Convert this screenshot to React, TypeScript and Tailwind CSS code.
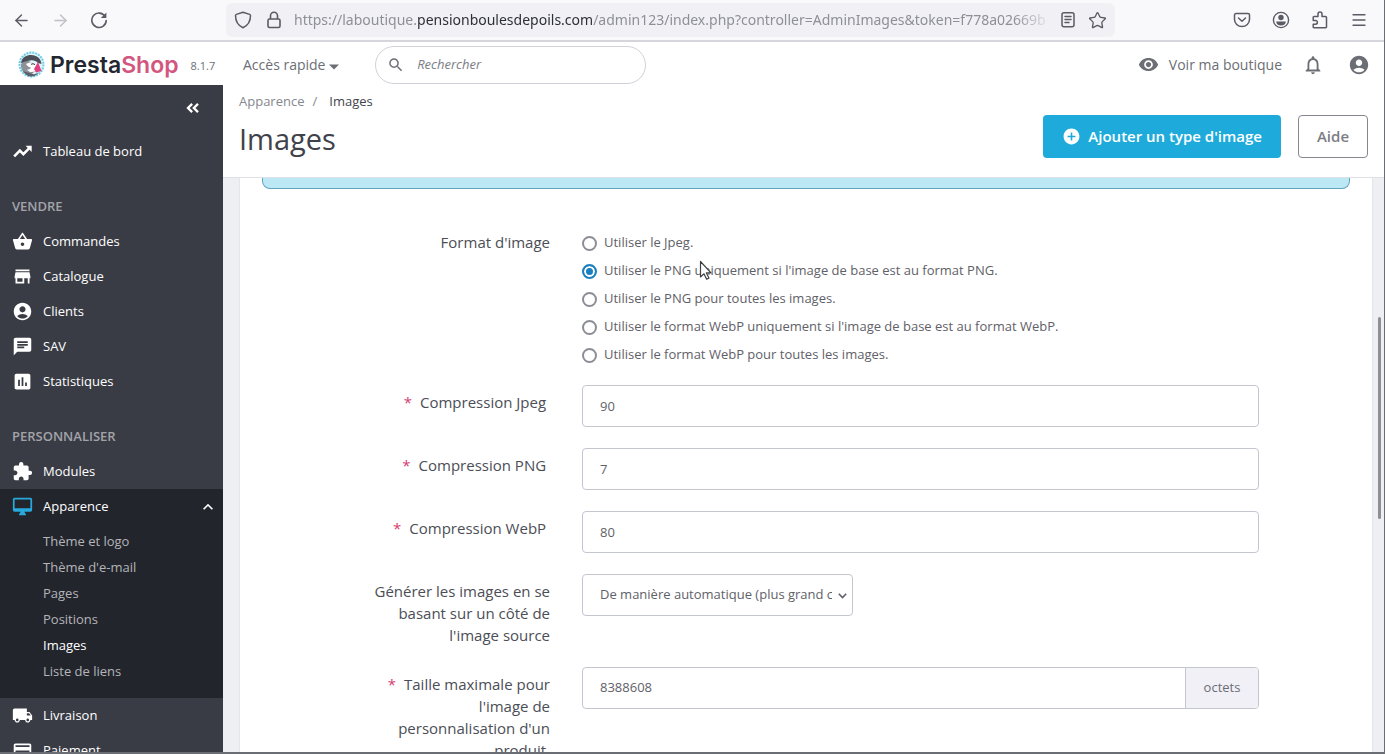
import { useState } from "react";
import type { ComponentType, ReactNode } from "react";
import { ArrowLeft, ArrowRight, ChevronsLeft, Menu, Star } from "lucide-react";
import {
  MdAccountCircle,
  MdAddCircle,
  MdAssessment,
  MdChat,
  MdExtension,
  MdKeyboardArrowUp,
  MdNotificationsNone,
  MdPayment,
  MdSearch,
} from "react-icons/md";

interface IconProps {
  size?: number;
  className?: string;
}

interface NavItem {
  label: string;
  icon: ComponentType<IconProps>;
}

// filled variants of the material icons
function solidIcon(d: string) {
  return function SolidIcon({ size = 24, className }: IconProps) {
    return (
      <svg width={size} height={size} viewBox="0 0 24 24" fill="currentColor" className={className}>
        <path d={d} />
      </svg>
    );
  };
}

const BasketIcon = solidIcon(
  "M17.21 9l-4.38-6.56c-.19-.28-.51-.42-.83-.42-.32 0-.64.14-.83.43L6.79 9H2c-.55 0-1 .45-1 1 0 .09.01.18.04.27l2.54 9.27c.23.84 1 1.46 1.92 1.46h13c.92 0 1.69-.62 1.93-1.46l2.54-9.27L23 10c0-.55-.45-1-1-1h-4.79zM9 9l3-4.4L15 9H9zm3 8c-1.1 0-2-.9-2-2s.9-2 2-2 2 .9 2 2-.9 2-2 2z"
);
const StoreIcon = solidIcon(
  "M20 4H4v2h16V4zm1 10v-2l-1-5H4l-1 5v2h1v6h10v-6h4v6h2v-6h1zm-9 4H6v-4h6v4z"
);
const TruckIcon = solidIcon(
  "M20 8h-3V4H3c-1.1 0-2 .9-2 2v11h2c0 1.66 1.34 3 3 3s3-1.34 3-3h6c0 1.66 1.34 3 3 3s3-1.34 3-3h2v-5l-3-4zM6 18.5c-.83 0-1.5-.67-1.5-1.5s.67-1.5 1.5-1.5 1.5.67 1.5 1.5-.67 1.5-1.5 1.5zm13.5-9l1.96 2.5H17V9.5h2.5zm-1.5 9c-.83 0-1.5-.67-1.5-1.5s.67-1.5 1.5-1.5 1.5.67 1.5 1.5-.67 1.5-1.5 1.5z"
);
const DesktopIcon = solidIcon(
  "M21 2H3c-1.1 0-2 .9-2 2v12c0 1.1.9 2 2 2h7l-2 3v1h8v-1l-2-3h7c1.1 0 2-.9 2-2V4c0-1.1-.9-2-2-2zm0 12H3V4h18v10z"
);
const EyeIcon = solidIcon(
  "M12 4.5C7 4.5 2.73 7.61 1 12c1.73 4.39 6 7.5 11 7.5s9.27-3.11 11-7.5c-1.73-4.39-6-7.5-11-7.5zM12 17c-2.76 0-5-2.24-5-5s2.24-5 5-5 5 2.24 5 5-2.24 5-5 5zm0-8c-1.66 0-3 1.34-3 3s1.34 3 3 3 3-1.34 3-3-1.34-3-3-3z"
);

function TrendIcon({ size = 24, className }: IconProps) {
  return (
    <svg width={size} height={size} viewBox="0 0 24 24" fill="none" stroke="currentColor" className={className}>
      <path d="m2.5 17.5 6.5-6.5 4 4 6.5-6.5" strokeWidth="3" />
      <path d="M15.5 5.5H22.5V12.5z" fill="currentColor" strokeWidth="0" />
    </svg>
  );
}

const sellItems: NavItem[] = [
  { label: "Commandes", icon: BasketIcon },
  { label: "Catalogue", icon: StoreIcon },
  { label: "Clients", icon: MdAccountCircle },
  { label: "SAV", icon: MdChat },
  { label: "Statistiques", icon: MdAssessment },
];

const designLinks = [
  "Thème et logo",
  "Thème d'e-mail",
  "Pages",
  "Positions",
  "Images",
  "Liste de liens",
];

const formats = [
  { value: "jpg", label: "Utiliser le Jpeg." },
  { value: "png", label: "Utiliser le PNG uniquement si l'image de base est au format PNG." },
  { value: "png_all", label: "Utiliser le PNG pour toutes les images." },
  { value: "webp", label: "Utiliser le format WebP uniquement si l'image de base est au format WebP." },
  { value: "webp_all", label: "Utiliser le format WebP pour toutes les images." },
];

function ReloadIcon() {
  return (
    <svg width="18" height="18" viewBox="0 0 18 18" fill="none" stroke="currentColor" strokeWidth="1.6">
      <path d="M15.2 5.6A7.2 7.2 0 1 0 16.2 9.6" strokeLinecap="round" />
      <path d="M16.4 1.5v5.6h-5.6z" fill="currentColor" stroke="none" />
    </svg>
  );
}

function ShieldIcon() {
  return (
    <svg width="18" height="18" viewBox="0 0 18 18" fill="none" stroke="currentColor" strokeWidth="1.5" strokeLinejoin="round">
      <path d="M9 1.2 15.6 3.4c.6.2.9.6.9 1.2 0 5.6-2.3 9.9-7.5 12.2C3.8 14.5 1.5 10.2 1.5 4.6c0-.6.3-1 .9-1.2z" />
    </svg>
  );
}

function LockIcon() {
  return (
    <svg width="16" height="18" viewBox="0 0 16 18" fill="none" stroke="currentColor" strokeWidth="1.6">
      <rect x="2" y="8" width="12" height="8.5" rx="1.5" />
      <path d="M4.5 8V4.8a3.5 3.5 0 0 1 7 0V8" />
    </svg>
  );
}

function ReaderIcon() {
  return (
    <svg width="16" height="18" viewBox="0 0 16 18" fill="none" stroke="currentColor" strokeWidth="1.5">
      <rect x="2" y="1.8" width="12" height="14" rx="2" />
      <path d="M5 5.5h6M5 8.5h6M5 11.5h4" strokeLinecap="round" />
    </svg>
  );
}

function PocketIcon() {
  return (
    <svg width="18" height="18" viewBox="0 0 18 18" fill="none" stroke="currentColor" strokeWidth="1.5" strokeLinejoin="round">
      <path d="M3 2.5h12a1.5 1.5 0 0 1 1.5 1.5v4.5a7.5 7 0 0 1-15 0V4A1.5 1.5 0 0 1 3 2.5z" />
      <path d="m5.5 7 3.5 3.2L12.5 7" strokeLinecap="round" />
    </svg>
  );
}

function ProfileIcon() {
  return (
    <svg width="18" height="18" viewBox="0 0 18 18" fill="none">
      <circle cx="9" cy="9" r="7.6" stroke="currentColor" strokeWidth="1.4" />
      <circle cx="9" cy="6.5" r="2.7" fill="currentColor" />
      <path d="M4.2 10.5h9.6c0 2.4-2 4-4.8 4s-4.8-1.6-4.8-4z" fill="currentColor" />
    </svg>
  );
}

function PuzzleIcon() {
  return (
    <svg width="18" height="18" viewBox="0 0 18 18" fill="none" stroke="currentColor" strokeWidth="1.5" strokeLinejoin="round">
      <path d="M7 5.500V3a2 2 0 0 1 4 0v2.500h3.500a1 1 0 0 1 1 1V16a.8.8 0 0 1-.8.8H3a.8.8 0 0 1-.8-.8v-2.800h2.300a1.900 1.900 0 0 0 0-3.800H2.200V6.500a1 1 0 0 1 1-1z" />
    </svg>
  );
}

function PrestaLogo() {
  return (
    <svg width="27" height="27" viewBox="0 0 27 27">
      <circle cx="13.5" cy="13.5" r="12" fill="#dff4fb" stroke="#6ccbe6" strokeWidth="2" strokeDasharray="2 1" />
      <path d="M3 12C4 6 8.5 4 13 4c6 0 10 3.5 10.5 9l-3.5-1c-3-3.5-9-3.5-12-.5z" fill="#4a4f58" />
      <path d="M3 13c1.5-2 4.5-3 8-3l4 3 2 7-5 5C6.5 24 2.5 19 3 13z" fill="#8d9299" />
      <path d="M8 13c3-2.500 8-2 10 1l-1 6c-3 2-6.500 1-8-1.500 2 .3 3.500-.5 4-2-2-.2-4-1.500-5-3.500z" fill="#fff" />
      <path d="M13 13.500c1-1 3-1 4 .3" stroke="#2c2f36" strokeWidth="1" fill="none" />
      <path d="m20 11 3.500 9-5.500 1.500-2-3.500z" fill="#df3f7d" />
      <path d="M5 20c3 1.500 5 1 8 2.500s5 .5 8-1.500c-2 3-5 4.500-8 4.500S7 23.500 5 20z" fill="#5b6068" />
    </svg>
  );
}

function BrowserBar() {
  return (
    <div className="flex h-[42px] shrink-0 items-center border-b-2 border-[#d5d5db] bg-[#f9f9fb] pr-4 pl-3 text-[#5b5b66]">
      <div className="flex w-[214px] items-center gap-5">
        <button type="button" aria-label="Précédent">
          <ArrowLeft size={19} strokeWidth={1.8} />
        </button>
        <button type="button" aria-label="Suivant" className="text-[#c0c0c6]">
          <ArrowRight size={19} strokeWidth={1.8} />
        </button>
        <button type="button" aria-label="Actualiser">
          <ReloadIcon />
        </button>
      </div>
      <div className="flex h-[34px] min-w-0 flex-1 items-center rounded-md bg-[#f1f0f5] px-2">
        <ShieldIcon />
        <span className="ml-[14px] shrink-0">
          <LockIcon />
        </span>
        <div className="ml-3 min-w-0 flex-1 overflow-hidden mask-r-from-95% font-['Noto_Sans',sans-serif] text-sm whitespace-nowrap text-[#8f8f97]">
          https://laboutique.<span className="text-[#2f2f38]">pensionboulesdepoils.com</span>
          /admin123/index.php?controller=AdminImages&amp;token=f778a02669b
        </div>
        <button type="button" aria-label="Mode lecture" className="ml-2">
          <ReaderIcon />
        </button>
        <button type="button" aria-label="Marque-page" className="ml-3">
          <Star size={19} strokeWidth={1.7} />
        </button>
      </div>
      <div className="ml-[118px] flex shrink-0 items-center gap-[21px]">
        <button type="button" aria-label="Pocket">
          <PocketIcon />
        </button>
        <button type="button" aria-label="Compte">
          <ProfileIcon />
        </button>
        <button type="button" aria-label="Extensions">
          <PuzzleIcon />
        </button>
        <button type="button" aria-label="Menu">
          <Menu size={18} strokeWidth={1.7} />
        </button>
      </div>
    </div>
  );
}

function ShopHeader() {
  return (
    <header className="flex h-[43px] shrink-0 items-center bg-white pt-[2px] pr-[14px] pl-[18px] text-[#6c6e75]">
      <div className="flex w-[225px] items-center">
        <PrestaLogo />
        <span className="ml-[5px] font-[Inter,sans-serif] text-[23px] leading-8 font-semibold text-[#24272f]">
          Presta<span className="text-[#d3567f]">Shop</span>
        </span>
        <span className="mt-1 ml-3 text-[11px]">8.1.7</span>
      </div>
      <button type="button" className="flex items-center gap-1 text-sm">
        Accès rapide
        <svg width="10" height="6" viewBox="0 0 10 6" className="mt-1">
          <path d="M0 .5h10L5 5.5z" fill="currentColor" />
        </svg>
      </button>
      <label className="ml-9 flex h-[38px] w-[271px] items-center rounded-full border border-[#cfd2d9] pl-[11px]">
        <MdSearch size={20} />
        <input
          type="text"
          placeholder="Rechercher"
          aria-label="Rechercher"
          className="ml-3 w-full bg-transparent text-[13px] italic outline-none placeholder:text-[#7b7d84]"
        />
      </label>
      <a href="#boutique" className="ml-auto flex items-center gap-[10px] text-sm">
        <EyeIcon size={21} />
        Voir ma boutique
      </a>
      <button type="button" aria-label="Notifications" className="ml-5">
        <MdNotificationsNone size={22} />
      </button>
      <button type="button" aria-label="Mon compte" className="ml-6">
        <MdAccountCircle size={22} />
      </button>
    </header>
  );
}

function NavLink({ label, icon: Icon, active }: NavItem & { active?: boolean }) {
  return (
    <a href="#nav" className="flex h-[35px] items-center gap-[10px] pr-[5px] pl-3 text-[13px] text-white">
      <Icon size={21} className={active ? "text-[#27a9dc]" : "text-white"} />
      {label}
      {active && <MdKeyboardArrowUp size={20} className="ml-auto" />}
    </a>
  );
}

function NavTitle({ children }: { children: ReactNode }) {
  return <h2 className="mt-7 mb-[9px] pl-3 text-[13px] leading-[18px] font-semibold text-[#a2a4a9]">{children}</h2>;
}

function Sidebar() {
  return (
    <nav className="w-[223px] shrink-0 overflow-hidden bg-[#3a3c45]">
      <div className="flex h-[49px] justify-end pr-5">
        <button type="button" aria-label="Réduire le menu" className="h-[46px] text-white">
          <ChevronsLeft size={20} strokeWidth={2.8} strokeLinecap="butt" strokeLinejoin="miter" />
        </button>
      </div>
      <NavLink label="Tableau de bord" icon={TrendIcon} />
      <NavTitle>VENDRE</NavTitle>
      {sellItems.map((item) => (
        <NavLink key={item.label} {...item} />
      ))}
      <NavTitle>PERSONNALISER</NavTitle>
      <NavLink label="Modules" icon={MdExtension} />
      <div className="bg-[#23252d] pb-[14px]">
        <NavLink label="Apparence" icon={DesktopIcon} active />
        <ul className="pt-1 pl-[43px] text-[13px]">
          {designLinks.map((label) => (
            <li key={label} className="h-[26px] leading-[26px]">
              <a href="#apparence" className={label === "Images" ? "text-white" : "text-[#b3b5b9]"}>
                {label}
              </a>
            </li>
          ))}
        </ul>
      </div>
      <NavLink label="Livraison" icon={TruckIcon} />
      <NavLink label="Paiement" icon={MdPayment} />
    </nav>
  );
}

interface RowProps {
  label: string;
  id: string;
  required?: boolean;
  children: ReactNode;
}

function FormRow({ label, id, required, children }: RowProps) {
  return (
    <div className="flex">
      <label htmlFor={id} className="w-80 shrink-0 pt-[6px] pr-8 pl-[106px] text-right text-[15px] leading-[22px] text-[#4b4e56]">
        {required && <span className="mr-2 text-[#d3406f]">*</span>}
        {label}
        {required && "\u00a0"}
      </label>
      <div className="min-w-0 flex-1">{children}</div>
    </div>
  );
}

function TextInput({ id, value }: { id: string; value: string }) {
  return (
    <input
      id={id}
      type="text"
      defaultValue={value}
      className="h-[42px] w-full rounded border border-[#c3c6cf] bg-white px-[17px] text-[13px] text-[#5f6168]"
    />
  );
}

export default function App() {
  const [format, setFormat] = useState("png");

  return (
    <div className="relative flex h-screen flex-col overflow-hidden border-r border-b-2 border-[#6b6d75] bg-white font-['Open_Sans',sans-serif]">
      <BrowserBar />
      <ShopHeader />
      <div className="flex min-h-0 flex-1">
        <Sidebar />
        <div className="flex min-w-0 flex-1 flex-col">
          <div className="flex h-[93px] shrink-0 justify-between border-b border-[#dfe1e6] pr-4 pl-4">
            <div>
              <div className="flex gap-2 pt-1 text-[13px] leading-6 text-[#85878e]">
                <a href="#apparence">Apparence</a>
                <span>/</span>
                <span className="ml-1 text-[#42454d]">Images</span>
              </div>
              <h1 className="mt-1 text-[29px] leading-[44px] text-[#3f424a]">Images</h1>
            </div>
            <div className="flex gap-[17px] pt-[30px]">
              <button
                type="button"
                className="flex h-[43px] items-center gap-[7px] rounded bg-[#1eabdb] px-[19px] text-[15px] font-semibold text-white"
              >
                <MdAddCircle size={19} />
                Ajouter un type d'image
              </button>
              <button
                type="button"
                className="h-[43px] w-[70px] rounded border border-[#85878e] text-[15px] font-semibold text-[#7c7e85]"
              >
                Aide
              </button>
            </div>
          </div>

          <div className="relative min-h-0 flex-1 overflow-hidden bg-[#eeeff2] pr-[11px] pl-4">
            <main className="min-h-full border-x border-[#e0e6eb] bg-white px-[22px]">
              <div className="h-[11px] rounded-b-lg border border-t-0 border-[#5fa6bd] bg-[#bce7f5]" />

              <form className="pt-10 pr-[91px]">
                <div role="radiogroup" aria-labelledby="format-label" className="flex">
                  <div
                    id="format-label"
                    className="w-80 shrink-0 pt-[2px] pr-8 text-right text-[15px] leading-[22px] text-[#4b4e56]"
                  >
                    Format d'image
                  </div>
                  <div className="flex-1">
                    {formats.map((item) => (
                      <label key={item.value} className="flex h-7 items-center gap-[7px] text-[13px] text-[#5f6168]">
                        <input
                          type="radio"
                          name="format"
                          value={item.value}
                          checked={format === item.value}
                          onChange={() => setFormat(item.value)}
                          className="size-[15px] shrink-0 appearance-none rounded-full border-2 border-[#8c8e95] bg-white checked:border-[#1c7fc0] checked:bg-[#1c7fc0] checked:inset-ring-2 checked:inset-ring-white"
                        />
                        {item.label}
                      </label>
                    ))}
                  </div>
                </div>
                <div className="mt-4 flex flex-col gap-[21px]">
                  <FormRow label="Compression Jpeg" id="jpeg" required>
                    <TextInput id="jpeg" value="90" />
                  </FormRow>
                  <FormRow label="Compression PNG" id="png" required>
                    <TextInput id="png" value="7" />
                  </FormRow>
                  <FormRow label="Compression WebP" id="webp" required>
                    <TextInput id="webp" value="80" />
                  </FormRow>
                  <FormRow label="Générer les images en se basant sur un côté de l'image source" id="side">
                    <div className="relative w-[271px]">
                      <select
                        id="side"
                        className="h-[42px] w-full appearance-none rounded border border-[#c3c6cf] bg-white pr-5 pl-[17px] text-[13px] text-[#5f6168]"
                      >
                        <option>De manière automatique (plus grand côté)</option>
                        <option>Largeur</option>
                        <option>Hauteur</option>
                      </select>
                      <svg
                        width="9"
                        height="6"
                        viewBox="0 0 9 6"
                        fill="none"
                        stroke="#5f6168"
                        strokeWidth="1.6"
                        className="pointer-events-none absolute top-[19px] right-[6px]"
                      >
                        <path d="m.8.8 3.700 3.700L8.200.8" />
                      </svg>
                    </div>
                  </FormRow>
                  <FormRow label="Taille maximale pour l'image de personnalisation d'un produit" id="size" required>
                    <div className="flex h-[42px] overflow-hidden rounded border border-[#c3c6cf]">
                      <input
                        id="size"
                        type="text"
                        defaultValue="8388608"
                        className="min-w-0 flex-1 px-[17px] text-[13px] text-[#5f6168]"
                      />
                      <span className="flex w-[73px] items-center justify-center border-l border-[#c3c6cf] bg-[#f1f0f6] text-[13px] text-[#6c6e75]">
                        octets
                      </span>
                    </div>
                  </FormRow>
                </div>
              </form>
            </main>
            {/* scroll thumb */}
            <div className="absolute top-[139px] right-[3px] h-[202px] w-[3px] rounded-full bg-[#8d8f95]" />
          </div>
        </div>
      </div>

      {/* mouse pointer */}
      <svg width="14" height="21" viewBox="0 0 14 21" className="pointer-events-none absolute top-[260px] left-[699px]">
        <path d="M1.5 1.5v15.5l3.5-3.2 2.6 5.4 2.3-1.1-2.5-5.2h4.6z" fill="#fff" stroke="#3f4147" strokeWidth="1.2" strokeLinejoin="round" />
      </svg>
    </div>
  );
}
